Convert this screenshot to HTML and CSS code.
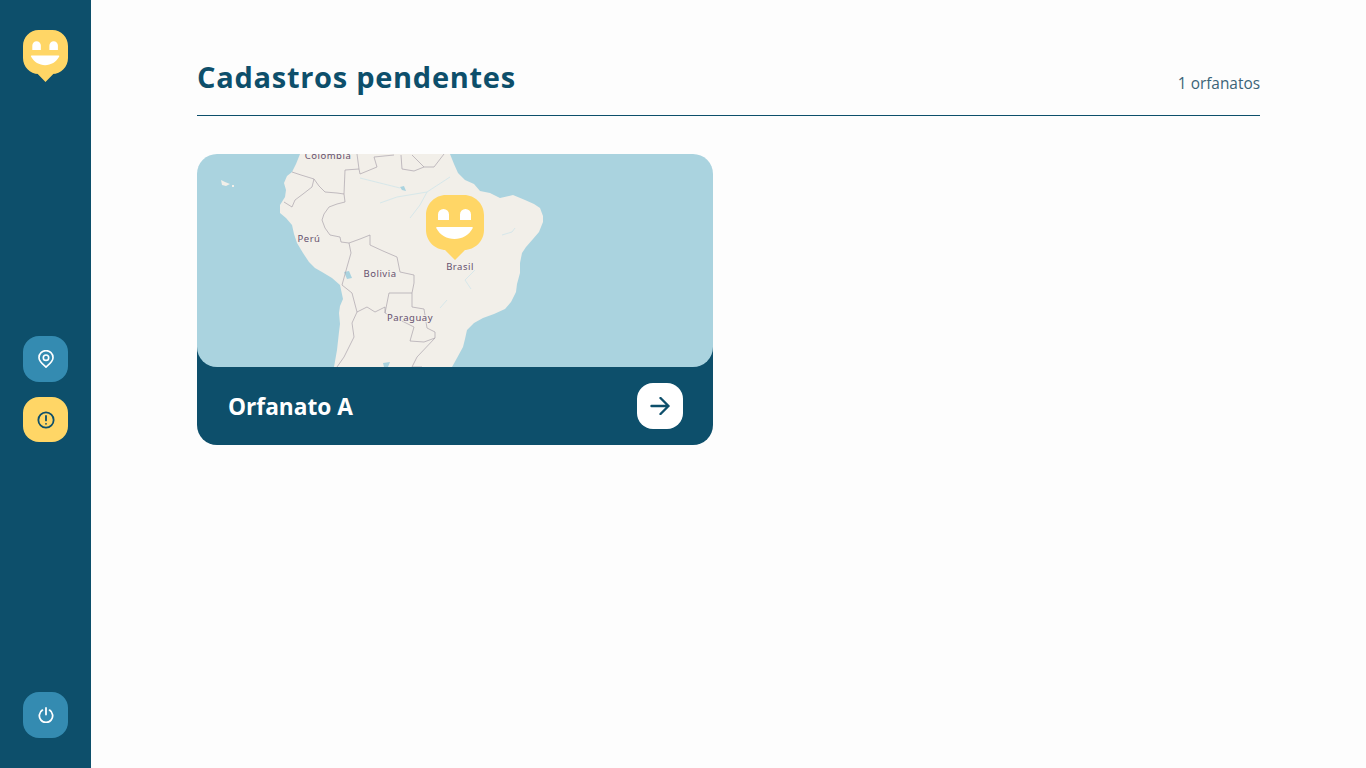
FILE: index.html
```html
<!DOCTYPE html>
<html lang="pt-BR">
<head>
    <meta charset="UTF-8">
    <title>Cadastros pendentes</title>
    <link rel="stylesheet" href="styles.css">
</head>
<body>
    <svg class="defs" width="0" height="0">
        <symbol id="smile" viewBox="0 0 58 65" preserveAspectRatio="none">
            <path fill="#ffd666" d="M20 0H38C49 0 58 9 58 20V35C58 46 49 55 38 55H39L29 65L19 55H20C9 55 0 46 0 35V20C0 9 9 0 20 0Z"/>
            <path fill="#fff" d="M12 25V19.500A5.500 5.500 0 0 1 23 19.500V25ZM34 25V19.500A5.500 5.500 0 0 1 45 19.500V25Z"/>
            <path fill="#fff" d="M11 32H46C47 32 47 33 46.500 33.500C43 40 36 44 28.500 44C21 44 14 40 10.500 33.500C10 33 10 32 11 32Z"/>
        </symbol>
    </svg>

    <aside class="sidebar">
        <svg class="logo"><use href="#smile"/></svg>
        <nav class="nav">
            <a class="nav-button" href="#">
                <svg class="icon" viewBox="0 0 18 20" fill="none" stroke="#fff" stroke-width="1.800" stroke-linejoin="round">
                    <path d="M9 19C5 15.500 1.200 12.500 1.200 8.500A7.800 7.800 0 0 1 16.800 8.500C16.800 12.500 13 15.500 9 19Z"/>
                    <circle cx="9" cy="8.500" r="3"/>
                </svg>
            </a>
            <a class="nav-button active" href="#">
                <svg class="icon" viewBox="0 0 20 20" fill="none" stroke="#0d4f6b" stroke-width="2" stroke-linecap="round">
                    <circle cx="10" cy="10" r="8.500"/>
                    <path d="M10 5.500V10.500M10 14.200V14.300"/>
                </svg>
            </a>
        </nav>
        <a class="nav-button" href="#">
            <svg class="icon-small" viewBox="0 0 18 18" fill="none" stroke="#fff" stroke-width="2" stroke-linecap="round">
                <path d="M9 1V8.500M5 3.500A7.500 7.500 0 1 0 13 3.500"/>
            </svg>
        </a>
    </aside>

    <main class="content">
        <header class="page-header">
            <h1>Cadastros pendentes</h1>
            <span class="counter">1 orfanatos</span>
        </header>

        <section class="cards">
            <article class="card">
                <div class="card-map">
                    <svg class="map" viewBox="0 0 516 213">
                        <rect width="516" height="213" fill="#aad3df"/>
                        <path class="land" d="M24 26L28 28L33 30L29 32L25 31ZM35 31H37V33H35Z"/>
                        <path class="land" d="M103 0L99 10L95 18L90 22L87 29L89 36L88 43L83 51L83 59L89 64L95 71L97 80L100 89L106 99L112 108L118 114L125 118L135 124L143 131L146 145L143 152L142 159L143 170L142 178L140 196L137 213H255L260 204L266 193L268 185L270 176L277 169L286 164L297 160L308 155L314 148L319 138L320 130L323 119L323 109L325 99L329 93L336 85L342 78L346 68L346 62L343 54L337 50L328 46L316 41L303 44L293 39L283 37L277 30L268 26L261 19L257 10L253 0Z"/>
                        <path class="water" d="M183 49L200 43L230 38L253 23M213 64L223 51L230 38M163 24L203 34M305 81L315 78L318 74M250 146L243 154M278 116L268 126M268 126L274 135"/>
                        <path class="lake" d="M147 118L152 117L155 124L150 125Z"/>
                        <path class="lake" d="M203 33L207 32L209 37L205 36Z"/>
                        <path class="lake" d="M186 209L193 208L191 213H187Z"/>
                        <path class="border" d="M95 18L104 21L117 25L122 32L128 38L140 39L147 40L148 48L140 50L132 53L127 60L125 66L128 74L133 81L143 83L144 88L152 89L163 85L173 81L173 91L186 97L200 103L203 118L217 121L217 129L215 139L215 153L227 155L230 174L238 178L238 184L227 188L213 187L217 173L207 168L188 159L192 139L215 139"/>
                        <path class="border" d="M117 25L115 33L106 40L98 46L95 53L87 48M147 40L148 16L162 15L160 0M162 15L163 20L180 13L177 3L197 1M204 1L205 15L217 17L227 13L215 1M227 13L237 13L247 0"/>
                        <path class="border" d="M152 89L154 99L150 113L145 131L155 139L160 158L170 153L178 158L188 153L188 159M160 158L155 169L157 183L147 203L140 213M238 184L220 203L215 213L225 213"/>
                        <text class="label" x="131" y="5">Colombia</text>
                        <text class="label" x="112" y="88">Perú</text>
                        <text class="label" x="183" y="123">Bolivia</text>
                        <text class="label" x="213" y="167">Paraguay</text>
                        <text class="label" x="263" y="116">Brasil</text>
                    </svg>
                    <svg class="map-marker"><use href="#smile"/></svg>
                </div>
                <footer class="card-footer">
                    <h2>Orfanato A</h2>
                    <a class="card-link" href="#">
                        <svg class="arrow" viewBox="0 0 20 18" fill="none" stroke="#0d4f6b" stroke-width="2.400" stroke-linecap="round" stroke-linejoin="round">
                            <path d="M1.500 9H18.500M10.500 1L18.500 9L10.500 17"/>
                        </svg>
                    </a>
                </footer>
            </article>
        </section>
    </main>
</body>
</html>
```

FILE: styles.css
```css
* {
    box-sizing: border-box;
}
body {
    margin: 0;
    height: 768px;
    display: flex;
    overflow: hidden;
    font-family: "Open Sans", "Noto Sans", sans-serif;
    background-color: #fdfdfd;
    color: #0d4f6b;
}
.defs {
    position: absolute;
}
.sidebar {
    width: 91px;
    flex-shrink: 0;
    padding: 30px 23px;
    display: flex;
    flex-direction: column;
    justify-content: space-between;
    background-color: #0d4f6b;
}
.logo {
    display: block;
    width: 45px;
    height: 52px;
    margin-bottom: 4px;
}
.nav {
    display: flex;
    flex-direction: column;
    gap: 15px;
}
.nav-button {
    width: 45px;
    height: 46px;
    display: flex;
    align-items: center;
    justify-content: center;
    border-radius: 16px;
    background-color: #348bb1;
}
.nav-button.active {
    height: 45px;
    background-color: #ffd666;
}
.icon {
    width: 18px;
    height: 18px;
}
.icon-small {
    width: 16px;
    height: 16px;
}
.content {
    flex: 1;
    padding: 54px 106px 0;
}
.page-header {
    height: 62px;
    display: flex;
    align-items: flex-start;
    justify-content: space-between;
    border-bottom: 1px solid #0d4f6b;
}
h1 {
    margin: 0;
    font-size: 29px;
    line-height: 46px;
    font-weight: 700;
    letter-spacing: 0.72px;
}
.counter {
    margin-top: 20px;
    font-size: 15.400px;
    line-height: 20px;
    color: #3b6478;
}
.cards {
    margin-top: 38px;
    display: grid;
    grid-template-columns: repeat(2, 516px);
}
.card {
    height: 291px;
}
.card-map {
    position: relative;
    z-index: 1;
    height: 213px;
    border-radius: 20px;
    overflow: hidden;
}
.map {
    display: block;
    width: 516px;
    height: 213px;
}
.land {
    fill: #f2efe9;
}
.lake {
    fill: #aad3df;
}
.water {
    fill: none;
    stroke: #cfe5ea;
    stroke-width: 0.800;
}
.border {
    fill: none;
    stroke: #aaa3ac;
    stroke-width: 0.700;
    stroke-linejoin: round;
}
.label {
    font-family: "Noto Sans", sans-serif;
    font-size: 9.500px;
    letter-spacing: 0.5px;
    text-anchor: middle;
    fill: #65506e;
    stroke: #f2efe9;
    stroke-width: 2px;
    paint-order: stroke;
}
.map-marker {
    position: absolute;
    left: 229px;
    top: 41px;
    width: 58px;
    height: 65px;
}
.card-footer {
    height: 98px;
    margin-top: -20px;
    padding: 20px 30px 0 31px;
    display: flex;
    align-items: center;
    justify-content: space-between;
    border-radius: 0 0 20px 20px;
    background-color: #0d4f6b;
}
h2 {
    margin: 0;
    font-size: 22.700px;
    font-weight: 700;
    color: #fff;
}
.card-link {
    width: 46px;
    height: 46px;
    display: flex;
    align-items: center;
    justify-content: center;
    border-radius: 16px;
    background-color: #fff;
}
.arrow {
    width: 20px;
    height: 18px;
}
```
